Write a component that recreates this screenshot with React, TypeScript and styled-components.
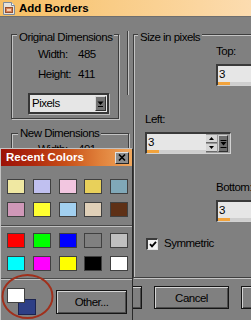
import React from "react";
import styled, { createGlobalStyle } from "styled-components";

const UI_FONT = `"Liberation Sans", Arial, sans-serif`;
const BOLD_FONT = `"Liberation Sans", Arial, sans-serif`;
const FACE = "#808080";

const GlobalStyle = createGlobalStyle`
  html, body { margin: 0; padding: 0; background: ${FACE}; overflow: hidden; }
  #root { width: 251px; height: 320px; overflow: hidden; }
`;

const Window = styled.div`
  position: relative;
  width: 400px;
  height: 320px;
  background: ${FACE};
  font-family: ${UI_FONT};
  font-size: 11.5px;
  letter-spacing: -0.5px;
  color: #000;
  overflow: hidden;
  white-space: nowrap;
`;

const TitleBar = styled.div`
  display: flex;
  align-items: center;
  gap: 3px;
  height: 17px;
  box-sizing: border-box;
  padding-left: 2px;
  border-bottom: 1px solid #6e6e6e;
  background: linear-gradient(90deg, #f7bf62 0%, #f9cc86 28%, #fbd6a0 50%, #fcdcb0 63%, #fde0b8 100%);
`;

const Title = styled.span`
  font-family: ${BOLD_FONT};
  font-weight: bold;
  font-size: 11.5px;
  letter-spacing: 0;
  line-height: 16px;
`;

const DialogBody = styled.div`
  display: flex;
  flex-direction: column;
`;

const Columns = styled.div`
  display: flex;
  margin-top: 8px;
  height: 253px;
`;

const LeftColumn = styled.div`
  width: 129px;
  box-sizing: border-box;
  padding-left: 11px;
  display: flex;
  flex-direction: column;
`;

const TopRow = styled.div`
  display: flex;
  align-items: flex-start;
`;

const EdgeRule = styled.div`
  width: 2px;
  height: 64px;
  margin: 6px 0 0 8px;
  box-sizing: border-box;
  border-left: 1px solid #3e3e3e;
  border-right: 1px solid #c4c4c4;
`;

const RightColumn = styled.div`
  flex: 1;
  padding-left: 4px;
  display: flex;
  flex-direction: column;
`;

const GroupBox = styled.fieldset<{ $width?: number; $gap?: number; $grow?: boolean }>`
  margin: ${(p) => p.$gap ?? 0}px 0 0 0;
  padding: 0;
  min-width: 0;
  ${(p) => (p.$width ? `width: ${p.$width}px;` : "")}
  ${(p) => (p.$grow ? "flex: 1;" : "")}
  box-sizing: border-box;
  border: 1px solid #3e3e3e;
  box-shadow: 1px 1px 0 #c4c4c4, inset 1px 1px 0 #c4c4c4;
  display: flex;
  flex-direction: column;
`;

const Legend = styled.legend<{ $drop?: boolean; $indent: number }>`
  margin-left: ${(p) => p.$indent}px;
  padding: ${(p) => (p.$drop ? "6px 2px 0" : "0 2px")};
  line-height: 13px;
  white-space: nowrap;
  background: ${FACE};
`;

const DimGrid = styled.div<{ $top: number }>`
  display: grid;
  grid-template-columns: 40px auto;
  row-gap: 5px;
  padding: ${(p) => p.$top}px 0 0 26px;
  line-height: 15px;
`;

const Select = styled.div`
  display: flex;
  align-items: center;
  justify-content: space-between;
  width: 81px;
  height: 21px;
  margin: 11px 0 4px 16px;
  box-sizing: border-box;
  border: 2px solid #363636;
  box-shadow: 1px 1px 0 #bdbdbd;
  background: #e6e6e6;
  padding-left: 2px;
  line-height: 15px;
`;

const SelectArrow = styled.span`
  display: flex;
  align-items: center;
  justify-content: center;
  width: 11px;
  height: 15px;
  margin-right: 1px;
  box-sizing: border-box;
  border-style: solid;
  border-width: 1px;
  border-color: #d6d6d6 #2e2e2e #2e2e2e #d6d6d6;
  background: #727272;
`;

const FieldRow = styled.div<{ $indent: number; $top: number }>`
  display: flex;
  gap: 56px;
  padding-left: ${(p) => p.$indent}px;
  margin-top: ${(p) => p.$top}px;
`;

const Field = styled.div`
  display: flex;
  flex-direction: column;
  gap: 5px;
`;

const FieldLabel = styled.span`
  line-height: 15px;
`;

const SpinFrame = styled.div`
  display: flex;
  width: 86px;
  height: 22px;
  box-sizing: border-box;
  border-style: solid;
  border-width: 2px 1px 1px 2px;
  border-color: #3a3a3a #d2d2d2 #d2d2d2 #3a3a3a;
  background: #9a9a9a;
`;

const SpinEdit = styled.div`
  display: flex;
  flex-direction: column;
  width: 59px;
  background: #e6e6e6;
`;

const SpinValue = styled.span`
  height: 16px;
  line-height: 16px;
  padding-left: 1px;
`;

const SpinTrack = styled.div`
  height: 3px;
  background: #cfcfcf;
  display: flex;
`;

const SpinFill = styled.div`
  width: 12px;
  background: #f2a33c;
`;

const SpinArrows = styled.div`
  display: flex;
  flex-direction: column;
  gap: 1px;
  width: 12px;
  box-sizing: border-box;
  padding: 1px 1px 1px 0;
`;

const SpinArrowBtn = styled.span`
  flex: 1;
  display: flex;
  align-items: center;
  justify-content: center;
  background: #d6d6d6;
  border-bottom: 1px solid #6a6a6a;
`;

const SpinPopout = styled.span`
  display: flex;
  align-items: center;
  justify-content: center;
  width: 10px;
  margin: 1px 0;
  box-sizing: border-box;
  border-style: solid;
  border-width: 1px;
  border-color: #d0d0d0 #303030 #303030 #d0d0d0;
  background: #6e6e6e;
`;

const CheckRow = styled.label`
  display: flex;
  align-items: center;
  gap: 6px;
  height: 15px;
  margin-top: 14px;
  padding-left: 12px;
  line-height: 15px;
`;

const CheckBox = styled.span`
  display: flex;
  align-items: center;
  justify-content: center;
  width: 12px;
  height: 12px;
  box-sizing: border-box;
  border-style: solid;
  border-width: 2px 1px 1px 2px;
  border-color: #3a3a3a #e2e2e2 #e2e2e2 #3a3a3a;
  background: #f2f2f2;
`;

const ButtonRow = styled.div`
  display: flex;
  gap: 12px;
  padding-left: 67px;
  margin-top: 8px;
`;

const PushButton = styled.button<{ $w?: number; $h?: number }>`
  width: ${(p) => p.$w ?? 75}px;
  height: ${(p) => p.$h ?? 23}px;
  box-sizing: border-box;
  padding: 0;
  border: 1px solid #151515;
  background: ${FACE};
  box-shadow: inset 1px 1px 0 #d4d4d4, inset -1px -1px 0 #4c4c4c;
  font-family: ${UI_FONT};
  font-size: 11.5px;
  letter-spacing: -0.5px;
  color: #000;
  flex-shrink: 0;
`;

/* Recent colors popup */
const Popup = styled.div`
  position: absolute;
  left: 0;
  top: 148px;
  width: 133px;
  height: 172px;
  box-sizing: border-box;
  border-left: 1px solid #c2c2c2;
  border-top: 1px solid #c2c2c2;
  border-right: 1px solid #2a2a2a;
  background: ${FACE};
  display: flex;
  flex-direction: column;
`;

const PopupTitle = styled.div`
  display: flex;
  align-items: center;
  justify-content: space-between;
  height: 17px;
  padding: 0 3px 0 5px;
  background: linear-gradient(90deg, #9c1208 0%, #b02a0e 25%, #c85018 50%, #e0803a 75%, #f0a85e 100%);
`;

const PopupTitleText = styled.span`
  font-family: ${BOLD_FONT};
  font-weight: bold;
  font-size: 11.5px;
  letter-spacing: 0;
  line-height: 17px;
  color: #fff;
`;

const CloseButton = styled.span`
  display: flex;
  align-items: center;
  justify-content: center;
  width: 14px;
  height: 12px;
  box-sizing: border-box;
  border-style: solid;
  border-width: 1px;
  border-color: #e2e2e2 #262626 #262626 #e2e2e2;
  background: #8e8e8e;
`;

const SwatchGrid = styled.div<{ $top: number }>`
  display: grid;
  grid-template-columns: repeat(5, 18px);
  column-gap: 7.75px;
  row-gap: 8px;
  padding-left: 6px;
  margin-top: ${(p) => p.$top}px;
`;

const Swatch = styled.span<{ $color: string }>`
  height: 15px;
  box-sizing: border-box;
  border: 1px solid #404040;
  background: ${(p) => p.$color};
`;

const PopupRule = styled.div<{ $top: number }>`
  margin-top: ${(p) => p.$top}px;
  height: 2px;
  box-sizing: border-box;
  border-top: 1px solid #4a4a4a;
  border-bottom: 1px solid #c0c0c0;
`;

const CurrentRow = styled.div`
  display: flex;
  align-items: flex-start;
  padding-left: 6px;
  margin-top: 8px;
`;

const ColorStack = styled.div`
  position: relative;
  width: 29px;
  height: 27px;
  flex-shrink: 0;
`;

const StackChip = styled.span<{ $color: string; $back?: boolean }>`
  position: absolute;
  left: ${(p) => (p.$back ? 11 : 0)}px;
  top: ${(p) => (p.$back ? 11 : 0)}px;
  width: 18px;
  height: ${(p) => (p.$back ? 16 : 15)}px;
  box-sizing: border-box;
  border: 1px solid ${(p) => (p.$back ? "#1c2450" : "#404040")};
  background: ${(p) => p.$color};
`;

const OtherButton = styled(PushButton)`
  margin: 2px 0 0 20px;
`;

const Annotation = styled.svg`
  position: absolute;
  left: 0;
  top: 272px;
  pointer-events: none;
`;

const RECENT = [
  "#f0e8a2", "#c0c0f0", "#f2c6e0", "#e8d05a", "#80a8b8",
  "#d098b8", "#ffff30", "#a2d0f0", "#e0d0b8", "#5e3016",
];
const BASIC = [
  "#ff0000", "#00ff00", "#0000ff", "#808080", "#c0c0c0",
  "#00ffff", "#ff00ff", "#ffff00", "#000000", "#ffffff",
];

const DownTriangle = () => (
  <svg width="7" height="6" viewBox="0 0 7 6">
    <path d="M0.5 0.5h6L3.5 4z" fill="#000" />
    <path d="M1 5.5h5" stroke="#000" strokeWidth="1" />
  </svg>
);

const TinyArrow = ({ up }: { up?: boolean }) => (
  <svg width="5" height="3" viewBox="0 0 5 3">
    <path d={up ? "M0 3h5L2.5 0z" : "M0 0h5L2.5 3z"} fill="#000" />
  </svg>
);

const PopoutGlyph = () => (
  <svg width="7" height="10" viewBox="0 0 7 10">
    <path d="M0.5 1.5h6" stroke="#000" strokeWidth="1" />
    <path d="M0.5 3h6L3.5 6.5z" fill="#000" />
    <path d="M0.5 8.5h6" stroke="#000" strokeWidth="1" />
  </svg>
);

const Spin = ({ value }: { value: string }) => (
  <SpinFrame>
    <SpinEdit>
      <SpinValue>{value}</SpinValue>
      <SpinTrack>
        <SpinFill />
      </SpinTrack>
    </SpinEdit>
    <SpinArrows>
      <SpinArrowBtn>
        <TinyArrow up />
      </SpinArrowBtn>
      <SpinArrowBtn>
        <TinyArrow />
      </SpinArrowBtn>
    </SpinArrows>
    <SpinPopout>
      <PopoutGlyph />
    </SpinPopout>
  </SpinFrame>
);

const SpinBox = ({ label, value }: { label: string; value: string }) => (
  <Field>
    <FieldLabel>{label}</FieldLabel>
    <Spin value={value} />
  </Field>
);

const AppIcon = () => (
  <svg width="14" height="15" viewBox="0 0 14 15">
    <path d="M1.5 1.5h8l3 3v9h-11z" fill="#e6e2da" stroke="#7d8a9a" />
    <path d="M9.5 1.5v3h3" fill="#ffffff" stroke="#7d8a9a" />
    <rect x="3.5" y="6.5" width="7" height="5" fill="#d88058" stroke="#96502c" />
    <rect x="5" y="8" width="4" height="2" fill="#f6cfae" />
  </svg>
);

export default function App() {
  return (
    <>
      <GlobalStyle />
      <Window>
        <TitleBar>
          <AppIcon />
          <Title>Add Borders</Title>
        </TitleBar>
        <DialogBody>
          <Columns>
            <LeftColumn>
              <TopRow>
                <GroupBox $width={108}>
                  <Legend $drop $indent={5}>Original Dimensions</Legend>
                  <DimGrid $top={3}>
                    <span>Width:</span>
                    <span>485</span>
                    <span>Height:</span>
                    <span>411</span>
                  </DimGrid>
                  <Select>
                    <span>Pixels</span>
                    <SelectArrow>
                      <DownTriangle />
                    </SelectArrow>
                  </Select>
                </GroupBox>
                <EdgeRule />
              </TopRow>
              <GroupBox $width={118} $gap={8} $grow>
                <Legend $indent={6}>New Dimensions</Legend>
                <DimGrid $top={2}>
                  <span>Width:</span>
                  <span>491</span>
                  <span>Height:</span>
                  <span>417</span>
                </DimGrid>
              </GroupBox>
            </LeftColumn>
            <RightColumn>
              <GroupBox $grow>
                <Legend $drop $indent={4}>Size in pixels</Legend>
                <FieldRow $indent={82} $top={0}>
                  <SpinBox label="Top:" value="3" />
                </FieldRow>
                <FieldRow $indent={11} $top={26}>
                  <SpinBox label="Left:" value="3" />
                  <SpinBox label="Right:" value="3" />
                </FieldRow>
                <FieldRow $indent={82} $top={26}>
                  <SpinBox label="Bottom:" value="3" />
                </FieldRow>
                <CheckRow>
                  <CheckBox>
                    <svg width="8" height="7" viewBox="0 0 8 7">
                      <path d="M1 3.2l2 2.2 4-4.6" fill="none" stroke="#000" strokeWidth="1.8" />
                    </svg>
                  </CheckBox>
                  <span>Symmetric</span>
                </CheckRow>
              </GroupBox>
            </RightColumn>
          </Columns>
          <ButtonRow>
            <PushButton>OK</PushButton>
            <PushButton>Cancel</PushButton>
            <PushButton>Help</PushButton>
          </ButtonRow>
        </DialogBody>

        <Popup>
          <PopupTitle>
            <PopupTitleText>Recent Colors</PopupTitleText>
            <CloseButton>
              <svg width="8" height="7" viewBox="0 0 8 7">
                <path d="M1 0.5l6 6M7 0.5l-6 6" stroke="#000" strokeWidth="1.6" />
              </svg>
            </CloseButton>
          </PopupTitle>
          <SwatchGrid $top={13}>
            {RECENT.map((c, i) => (
              <Swatch key={i} $color={c} />
            ))}
          </SwatchGrid>
          <PopupRule $top={8} />
          <SwatchGrid $top={6}>
            {BASIC.map((c, i) => (
              <Swatch key={i} $color={c} />
            ))}
          </SwatchGrid>
          <PopupRule $top={7} />
          <CurrentRow>
            <ColorStack>
              <StackChip $color="#2e3f86" $back />
              <StackChip $color="#ffffff" />
            </ColorStack>
            <OtherButton $w={71} $h={24}>Other...</OtherButton>
          </CurrentRow>
        </Popup>

        <Annotation width="60" height="48" viewBox="0 0 60 48">
          <ellipse cx="27.5" cy="24.5" rx="25" ry="21.5" fill="none" stroke="#a0301c" strokeWidth="2" />
        </Annotation>
      </Window>
    </>
  );
}
